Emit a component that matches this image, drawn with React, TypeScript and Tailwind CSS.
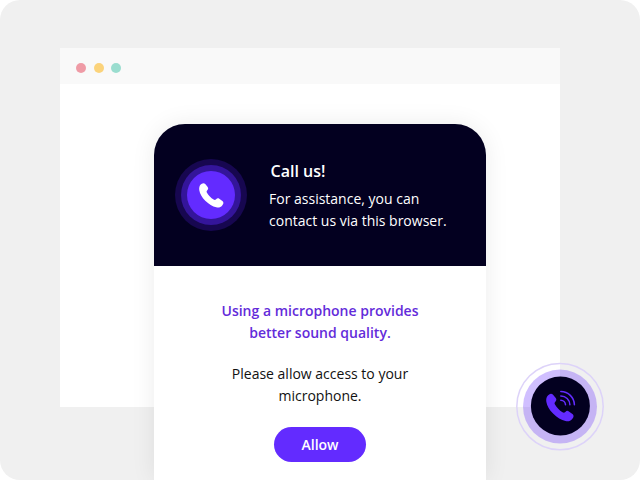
const HANDSET =
  "M1.5 1.6 L2.6 .7 C3.7 0 5.1 0 6 1.1 L8.2 3.7 C9.2 5 9.1 6 8.2 6.9 C7.3 7.8 7.1 8.5 7.7 9.6 C9.3 12.2 11.6 14.7 14.3 16.4 C15.3 17 16 16.9 16.8 16.1 C17.7 15.1 18.7 14.8 19.9 15.6 L23 17.9 C24.1 18.8 24.3 20 23.6 21.1 L22.8 22.3 C21.3 24.2 19.3 24.6 16.9 24.1 C13.3 23.3 9.5 20.9 6 17.5 C2.7 14.3 .7 10.8 .1 7.2 C-.2 5 .2 2.9 1.5 1.6 Z";

function CallBadge() {
  return (
    <div className="flex size-[72px] shrink-0 items-center justify-center rounded-full bg-[#170750]">
      <div className="flex size-[60px] items-center justify-center rounded-full bg-[#34159a]">
        <div className="flex size-12 items-center justify-center rounded-full bg-[#632bff]">
          <svg viewBox="0 0 24 24.4" className="size-[24.6px] overflow-visible" fill="#fff">
            <path d={HANDSET} />
          </svg>
        </div>
      </div>
    </div>
  );
}

function CallCard() {
  return (
    <section className="mt-10 ml-[94px] h-[356px] w-[332px] rounded-t-[32px] bg-white shadow-[0_0_24px_rgba(0,0,0,0.08)]">
      <header className="flex h-[142px] items-center rounded-t-[31px] bg-[#030020] pl-[21px] text-white">
        <CallBadge />
        <div className="ml-[22px]">
          <h1 className="ml-[1.5px] text-base leading-6 font-semibold">Call us!</h1>
          <p className="mt-[5px] text-sm leading-[22px] whitespace-nowrap">
            For assistance, you can
            <br />
            contact us via this browser.
          </p>
        </div>
      </header>
      <div className="flex flex-col items-center pt-[34px] text-center text-sm leading-[22px]">
        <p className="font-semibold text-[#632bda]">
          Using a microphone provides
          <br />
          better sound quality.
        </p>
        <p className="mt-[19px] text-[#111]">
          Please allow access to your
          <br />
          microphone.
        </p>
        <button className="mt-5 h-[35px] w-[92px] rounded-full bg-[#632bff] text-sm font-semibold text-white">
          Allow
        </button>
      </div>
    </section>
  );
}

function FloatingCall() {
  return (
    <button aria-label="Call" className="absolute top-[362px] left-[515px] size-[90px]">
      <svg viewBox="515 362 90 90" className="size-full" fill="none">
        <circle cx="560" cy="406.6" r="43.2" stroke="#ddd3f9" strokeWidth="1.5" />
        <circle cx="560" cy="406.6" r="37" fill="#632bff" fillOpacity=".3" />
        <circle cx="560.4" cy="405.9" r="29.5" fill="#030020" />
        <path d={HANDSET} transform="translate(546.2 393.6) scale(1.14)" fill="#632bff" />
        <g stroke="#632bff" strokeWidth="1.5" strokeLinecap="round">
          <path d="M560.8 391.6 A13.5 13.5 0 0 1 574.4 404.8" />
          <path d="M560.8 396 A9 9 0 0 1 569.9 404.8" />
          <path d="M560.8 400.3 A4.7 4.7 0 0 1 565.5 404.8" />
        </g>
      </svg>
    </button>
  );
}

export default function App() {
  return (
    <main className="relative h-[480px] w-[640px] overflow-hidden bg-white font-['Open_Sans',sans-serif]">
      <div className="h-full rounded-[20px] bg-[#f0f0f0] pt-12 pl-[60px]">
        <div className="h-[359px] w-[500px] bg-white">
          <div className="flex h-9 items-center gap-[7.6px] bg-[#f9f9f9] pt-1 pl-4">
            <span className="size-2.5 rounded-full bg-[#ef9ba6]" />
            <span className="size-2.5 rounded-full bg-[#fbd37b]" />
            <span className="size-2.5 rounded-full bg-[#9addcf]" />
          </div>
          <CallCard />
        </div>
      </div>
      <FloatingCall />
    </main>
  );
}
